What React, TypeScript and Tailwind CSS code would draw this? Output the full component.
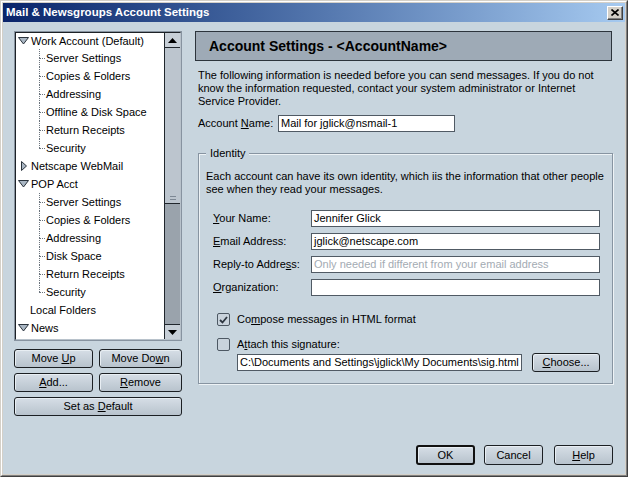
import type { ReactNode } from "react";

function Twisty({ open }: { open: boolean }) {
  return open ? (
    <svg width="11" height="8" viewBox="0 0 11 8" className="shrink-0">
      <polygon points="0.5,0.5 10.5,0.5 5.5,7" fill="#aab7c4" stroke="#2a333c" strokeWidth="1" />
    </svg>
  ) : (
    <svg width="11" height="10" viewBox="0 0 11 10" className="shrink-0">
      <polygon points="3.5,0.5 8.5,5 3.5,9.5" fill="#aab7c4" stroke="#2a333c" strokeWidth="1" />
    </svg>
  );
}

function Parent({ open, label, first }: { open: boolean; label: string; first?: boolean }) {
  return (
    <div className={`flex items-center gap-[2px] pl-[2px] ${first ? "h-[16px]" : "h-[18px]"}`}>
      <Twisty open={open} />
      <span>{label}</span>
    </div>
  );
}

function Child({ label, last }: { label: string; last?: boolean }) {
  return (
    <div className="flex h-[18px] items-stretch">
      <div className="ml-[23px] flex w-[6px] flex-col">
        <div className="h-1/2 border-l border-dotted border-[#6b747d]" />
        <div
          className={`h-1/2 border-t border-dotted border-[#6b747d] ${last ? "" : "border-l"}`}
        />
      </div>
      <span className="ml-[1px] self-center">{label}</span>
    </div>
  );
}

function Btn({ children, className = "", bold }: { children: ReactNode; className?: string; bold?: boolean }) {
  return (
    <div
      className={`flex items-center justify-center rounded-[3px] bg-linear-to-b from-[#d6dee6] to-[#b8c3cd] shadow-[inset_1px_1px_0_#e8eef3] ${
        bold ? "border-2 border-[#111]" : "border border-[#1b1f23]"
      } ${className}`}
    >
      {children}
    </div>
  );
}

function Box({ value, placeholder, className = "" }: { value?: string; placeholder?: string; className?: string }) {
  return (
    <div className={`flex h-[17px] items-center border border-[#505a64] bg-white px-[2px] ${className}`}>
      {value ? <span>{value}</span> : <span className="text-[#a3abb3]">{placeholder}</span>}
    </div>
  );
}

function Check({ checked }: { checked?: boolean }) {
  return (
    <div className="flex h-[13px] w-[13px] shrink-0 items-center justify-center rounded-[2px] border border-[#4d5863] bg-[#c9d3dc]">
      {checked && (
        <svg width="9" height="8" viewBox="0 0 9 8">
          <polyline points="1,4 3.5,6.5 8,1" fill="none" stroke="#2d3640" strokeWidth="1.8" />
        </svg>
      )}
    </div>
  );
}

function Row({ label, children }: { label: ReactNode; children: ReactNode }) {
  return (
    <div className="flex h-[17px] items-center">
      <div className="w-[105px] pl-[7px]">{label}</div>
      {children}
    </div>
  );
}

export default function App() {
  return (
    <div className="h-[477px] w-[628px] border border-t-[#d4d0c8] border-l-[#d4d0c8] border-b-[#404040] border-r-[#404040] bg-[#d4d0c8] font-['Liberation_Sans',Arial,sans-serif] text-[11px] leading-[13px] text-black">
      <div className="flex h-full flex-col border border-t-white border-l-white border-b-[#808080] border-r-[#808080] p-[1px]">
        {/* title bar */}
        <div className="flex h-[19px] shrink-0 items-center justify-between bg-linear-to-r from-[#0a246a] to-[#a6caf0] pl-[3px] pr-[2px]">
          <span className="text-[11.5px] font-bold text-white">Mail &amp; Newsgroups Account Settings</span>
          <div className="flex h-[14px] w-[16px] items-center justify-center border border-t-white border-l-white border-b-[#404040] border-r-[#404040] bg-[#d4d0c8] shadow-[inset_-1px_-1px_0_#808080]">
            <svg width="8" height="7" viewBox="0 0 8 7">
              <path d="M0.5 0.5 L7.5 6.5 M7.5 0.5 L0.5 6.5" stroke="#000" strokeWidth="1.6" />
            </svg>
          </div>
        </div>

        <div className="flex flex-1 bg-[#c8d5de]">
          {/* left column */}
          <div className="ml-[11px] mt-[9px] flex w-[168px] flex-col">
            <div className="flex h-[310px] border border-[#8793a0] bg-white">
              <div className="flex flex-1 border border-t-[#1d2227] border-l-[#1d2227] border-b-[#b8c2cb] border-r-[#b8c2cb]">
                <div className="flex-1 overflow-hidden">
                  <Parent open first label="Work Account (Default)" />
                  <Child label="Server Settings" />
                  <Child label="Copies & Folders" />
                  <Child label="Addressing" />
                  <Child label="Offline & Disk Space" />
                  <Child label="Return Receipts" />
                  <Child label="Security" last />
                  <Parent open={false} label="Netscape WebMail" />
                  <Parent open label="POP Acct" />
                  <Child label="Server Settings" />
                  <Child label="Copies & Folders" />
                  <Child label="Addressing" />
                  <Child label="Disk Space" />
                  <Child label="Return Receipts" />
                  <Child label="Security" last />
                  <div className="flex h-[18px] items-center pl-[14px]">Local Folders</div>
                  <Parent open label="News" />
                </div>
                {/* scrollbar */}
                <div className="flex w-[16px] flex-col border-l border-[#20262c]">
                  <div className="flex h-[15px] items-center justify-center border-b border-[#20262c] bg-[#c7cfd7]">
                    <svg width="9" height="5" viewBox="0 0 9 5">
                      <polygon points="0,5 9,5 4.5,0" fill="#000" />
                    </svg>
                  </div>
                  <div className="flex h-[156px] flex-col items-center justify-end gap-[2px] border-b border-[#20262c] bg-[#bcc5ce] pb-[3px]">
                    <div className="h-px w-[6px] bg-[#7d8894]" />
                    <div className="h-px w-[6px] bg-[#7d8894]" />
                  </div>
                  <div className="flex-1 bg-[#9aa3ac]" />
                  <div className="flex h-[15px] items-center justify-center border-t border-[#20262c] bg-[#c7cfd7]">
                    <svg width="9" height="5" viewBox="0 0 9 5">
                      <polygon points="0,0 9,0 4.5,5" fill="#000" />
                    </svg>
                  </div>
                </div>
              </div>
            </div>

            <div className="mt-[8px] flex flex-col gap-[5px]">
              <div className="flex gap-[6px]">
                <Btn className="h-[19px] w-[79px]">
                  Move&nbsp;<u>U</u>p
                </Btn>
                <Btn className="h-[19px] flex-1">
                  Move Do<u>w</u>n
                </Btn>
              </div>
              <div className="flex gap-[6px]">
                <Btn className="h-[19px] w-[79px]">
                  <u>A</u>dd...
                </Btn>
                <Btn className="h-[19px] flex-1">
                  <u>R</u>emove
                </Btn>
              </div>
              <Btn className="h-[19px]">
                Set as&nbsp;<u>D</u>efault
              </Btn>
            </div>
          </div>

          {/* right column */}
          <div className="ml-[13px] mt-[9px] flex w-[417px] flex-col">
            <div className="flex h-[30px] items-center border border-[#2c343c] bg-[#9eaab6] pl-[13px] text-[14px] font-bold">
              Account Settings - &lt;AccountName&gt;
            </div>

            <p className="ml-[3px] mt-[8px]">
              The following information is needed before you can send messages. If you do not
              <br />
              know the information requested, contact your system administrator or Internet
              <br />
              Service Provider.
            </p>

            <div className="ml-[3px] mt-[7px] flex h-[17px] items-center">
              <span className="w-[80px]">
                Account <u>N</u>ame:
              </span>
              <Box value="Mail for jglick@nsmail-1" className="w-[177px]" />
            </div>

            <fieldset className="ml-[3px] mt-[15px] w-[415px] border border-[#8794a1] px-[7px] pb-[11px] shadow-[inset_1px_1px_0_#eef3f6,1px_1px_0_#eef3f6]">
              <legend className="ml-0 bg-[#c8d5de] px-[4px]">Identity</legend>
              <p className="mt-[10px]">
                Each account can have its own identity, which iis the information that other people
                <br />
                see when they read your messages.
              </p>
              <div className="mt-[14px] flex flex-col gap-[6px]">
                <Row
                  label={
                    <>
                      <u>Y</u>our Name:
                    </>
                  }
                >
                  <Box value="Jennifer Glick" className="w-[289px]" />
                </Row>
                <Row
                  label={
                    <>
                      <u>E</u>mail Address:
                    </>
                  }
                >
                  <Box value="jglick@netscape.com" className="w-[289px]" />
                </Row>
                <Row
                  label={
                    <>
                      Reply-to Addre<u>s</u>s:
                    </>
                  }
                >
                  <Box placeholder="Only needed if different from your email address" className="w-[289px] border-[#8d97a1]" />
                </Row>
                <Row
                  label={
                    <>
                      <u>O</u>rganization:
                    </>
                  }
                >
                  <Box className="w-[289px]" />
                </Row>
              </div>

              <div className="ml-[11px] mt-[17px] flex h-[13px] items-center gap-[7px]">
                <Check checked />
                <span>
                  Co<u>m</u>pose messages in HTML format
                </span>
              </div>
              <div className="ml-[11px] mt-[12px] flex h-[13px] items-center gap-[7px]">
                <Check />
                <span>
                  A<u>t</u>tach this signature:
                </span>
              </div>
              <div className="ml-[31px] mt-[2px] flex h-[19px] items-center gap-[10px]">
                <Box value="C:\Documents and Settings\jglick\My Documents\sig.html" className="w-[285px]" />
                <Btn className="h-[19px] w-[68px]">
                  <u>C</u>hoose...
                </Btn>
              </div>
            </fieldset>

            <div className="mb-[9px] mt-auto flex justify-end gap-[9px] pr-0">
              <Btn bold className="h-[20px] w-[59px]">
                OK
              </Btn>
              <Btn className="mr-[2px] h-[20px] w-[59px]">Cancel</Btn>
              <Btn className="mr-[-1px] h-[20px] w-[59px]">
                <u>H</u>elp
              </Btn>
            </div>
          </div>
        </div>
      </div>
    </div>
  );
}
